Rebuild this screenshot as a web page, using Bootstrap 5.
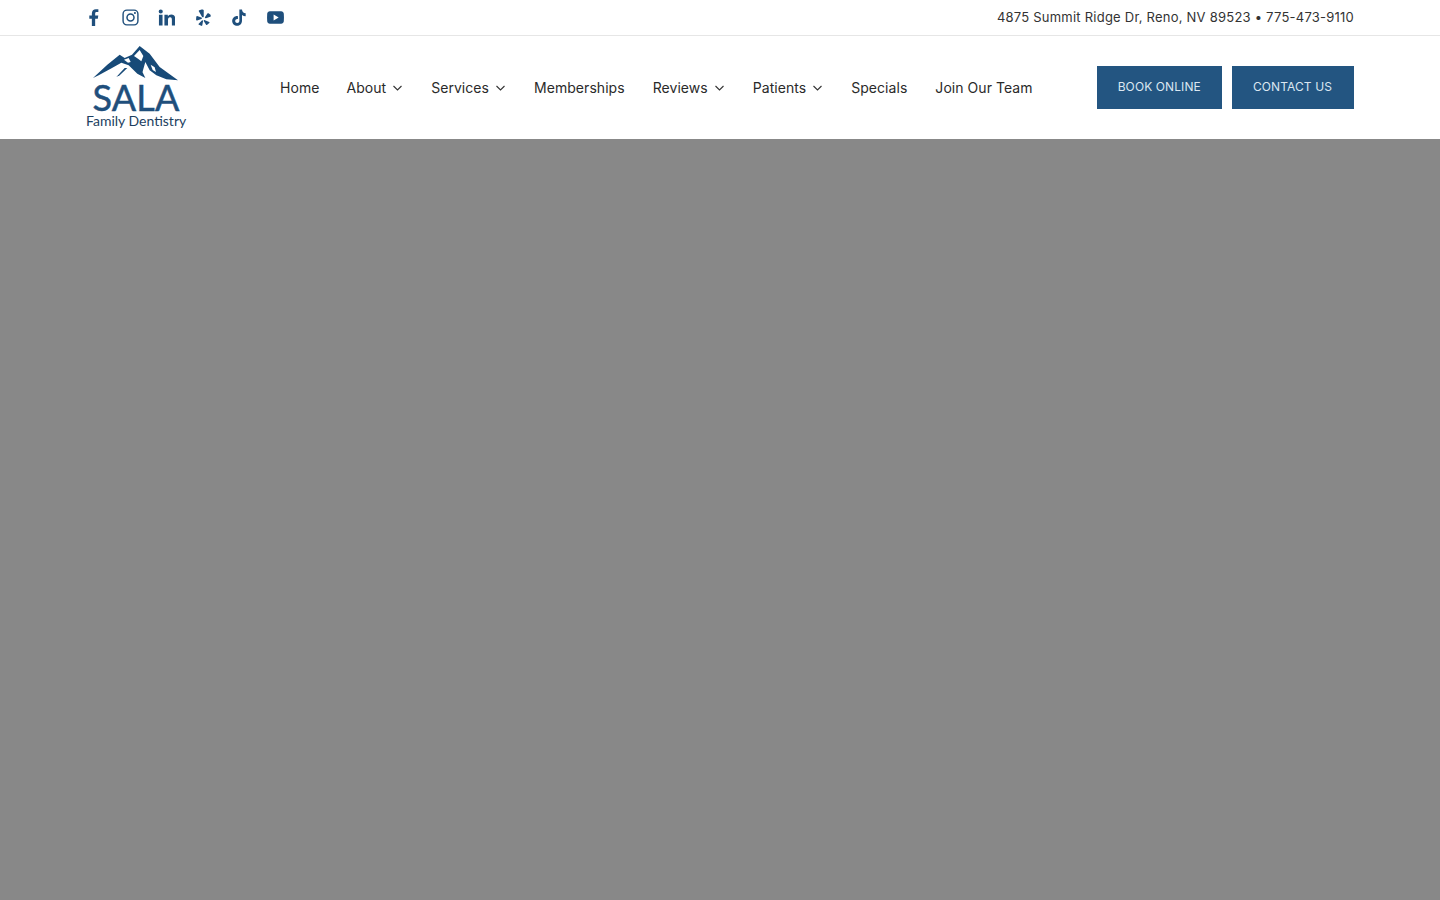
<!doctype html>
<html lang="en">
  <head>
    <meta charset="utf-8">
    <meta name="viewport" content="width=device-width, initial-scale=1">
    <title>Sala Family Dentistry</title>
    <link href="https://cdn.jsdelivr.net/npm/bootstrap@5.3.0/dist/css/bootstrap.min.css" rel="stylesheet">
    <style>
      html, body { height: 100%; }
      body {
        font-family: Inter, "Liberation Sans", sans-serif;
        background-color: #888888;
        color: #212934;
        overflow: hidden;
      }

      /* Top bar */
      .top-strip {
        height: 36px;
        background-color: #fff;
        border-bottom: 1px solid #e6e6e6;
        padding: 0 86px;
      }
      .social-row { margin-left: -10px; }
      .social-link {
        width: 36.2px;
        height: 35px;
        color: #1f4f7c;
      }
      .social-link svg { width: 17px; height: 17px; fill: currentColor; }
      .top-address {
        font-size: 13px;
        letter-spacing: .23px;
        color: #333;
      }

      /* Main header */
      .main-header {
        height: 103px;
        background-color: #fff;
        padding: 0 86px;
      }
      .site-logo {
        width: 194px;
        height: 103px;
        padding-top: 6px;
      }
      .logo-peaks { width: 96px; height: 44px; margin-left: 2px; display: block; }
      .logo-name {
        width: 100px;
        text-align: center;
        font-family: Lato, sans-serif;
        font-weight: 400;
        font-size: 36px;
        line-height: 28px;
        letter-spacing: .2px;
        color: #1f4f7c;
        -webkit-text-stroke: .5px #1f4f7c;
        margin-top: -3px;
      }
      .logo-sub {
        width: 100px;
        margin-top: 2px;
        text-align: center;
        font-family: Lato, sans-serif;
        font-size: 14px;
        line-height: 16px;
        color: #1d3f61;
        white-space: nowrap;
      }
      .menu-list { gap: 28px; }
      .menu-list .nav-link {
        padding: 0;
        font-size: 14px;
        letter-spacing: .05px;
        color: #2a2a2a;
      }
      .menu-first { margin-right: -1px; }
      .menu-caret { width: 10px; height: 10px; margin-left: 7px; }
      .header-actions { gap: 10px; }
      .header-btn {
        height: 43px;
        border-radius: 0;
        border: 0;
        font-size: 12px;
        letter-spacing: .1px;
        background-color: #235581;
        color: #dbe7f1;
        padding: 0 21px 1px;
      }
      .header-btn-wide { padding: 0 22px 1px 21px; }
      .header-btn:hover { background-color: #1f4f7c; color: #fff; }
    </style>
  </head>
  <body>
    <!-- Top bar -->
    <div class="top-strip d-flex align-items-center justify-content-between">
      <div class="d-flex social-row">
        <a class="social-link d-flex align-items-center justify-content-center" href="#" aria-label="Facebook">
          <svg viewBox="0 0 18 18"><path d="M6.200 18V10.200H3.500V6.800h2.700V4.700C6.200 1.800 7.900.2 10.500.2c1.200 0 2.300.1 2.600.1v3h-1.700c-1.400 0-1.700.7-1.700 1.600v1.900h3.300l-.5 3.400H9.700V18z"/></svg>
        </a>
        <a class="social-link d-flex align-items-center justify-content-center" href="#" aria-label="Instagram">
          <svg viewBox="0 0 18 18"><path fill-rule="evenodd" d="M5.200.4h7.600a4.800 4.800 0 0 1 4.800 4.800v7.600a4.800 4.800 0 0 1-4.800 4.800H5.200a4.800 4.800 0 0 1-4.800-4.800V5.200A4.800 4.800 0 0 1 5.200.4zm0 1.500a3.300 3.300 0 0 0-3.300 3.300v7.600a3.300 3.300 0 0 0 3.300 3.300h7.600a3.300 3.300 0 0 0 3.300-3.300V5.200a3.300 3.300 0 0 0-3.300-3.300zM9 4.500a4.500 4.500 0 1 1 0 9 4.500 4.500 0 0 1 0-9zm0 1.600a2.900 2.900 0 1 0 0 5.800 2.900 2.900 0 0 0 0-5.800zm4.700-2.900a1.100 1.100 0 1 1 0 2.200 1.100 1.100 0 0 1 0-2.200z"/></svg>
        </a>
        <a class="social-link d-flex align-items-center justify-content-center" href="#" aria-label="LinkedIn">
          <svg viewBox="-.6 0 18 18"><path d="M.4 6h3.800v11.600H.4zM2.300.4a2.200 2.200 0 1 1 0 4.400 2.200 2.200 0 0 1 0-4.400zM6.200 6h3.600v1.600h.1c.5-.9 1.700-1.900 3.500-1.900 3.700 0 4.300 2.400 4.300 5.500v6.400H14.100v-5.700c0-1.300 0-3.100-1.900-3.100s-2.200 1.500-2.200 3v5.800H6.200z"/></svg>
        </a>
        <a class="social-link d-flex align-items-center justify-content-center" href="#" aria-label="Yelp">
          <svg viewBox="-1.800 0 18 18"><path d="M6.300.5 3.800 1.300c-.5.200-.7.700-.5 1.100l3.500 6c.5.800 1.700.4 1.700-.5V1.300C8.500.6 7 .3 6.300.5zM1.500 7.500c-.5 0-.8.300-.9.800l-.2 3c0 .6.500 1 1.100.8l4.500-1.400c.8-.3.800-1.300 0-1.600zM6.500 12.100l-3.300 3.500c-.4.400-.3 1 .2 1.200l2.500 1c.5.200 1 0 1.100-.5l.8-4.600c.1-.8-.8-1.200-1.300-.6zM9.800 11.900c-.6-.6-1.500-.1-1.300.7l2.500 4c.3.400.9.500 1.200.1l2.200-1.800c.4-.3.300-.9-.1-1.200zM15.700 6.100l-2.100-1.500c-.4-.3-.9-.2-1.200.2l-2.500 3.700c-.5.700.2 1.600 1 1.300l4.500-1.500c.5-.2.700-.8.500-1.200z"/></svg>
        </a>
        <a class="social-link d-flex align-items-center justify-content-center" href="#" aria-label="TikTok">
          <svg viewBox="-.6 0 18 18"><path d="M9.300.4h2.800c.1 2.400 1.700 4 3.900 4.200v3c-1.500 0-2.800-.5-3.900-1.300v6.200c0 3.300-2.400 5.300-5.100 5.300-3 0-5.300-2.300-5.300-5.100 0-3.100 2.800-5.600 6.100-5.100v3.100c-1.500-.4-2.900.6-2.900 2 0 1.200 1 2.100 2.100 2.100 1.300 0 2.300-1 2.300-2.400z"/></svg>
        </a>
        <a class="social-link d-flex align-items-center justify-content-center" href="#" aria-label="YouTube">
          <svg viewBox="0 0 18 18"><path fill-rule="evenodd" d="M3 2.400h12c1.500 0 2.600 1.100 2.800 2.500.2 2.600.2 5.500 0 8.100-.2 1.500-1.300 2.600-2.800 2.600H3c-1.500 0-2.600-1.100-2.800-2.600C0 10.400 0 7.500.2 4.900.4 3.500 1.500 2.400 3 2.400zM7 5.800v6.400l5.400-3.200z"/></svg>
        </a>
      </div>
      <div class="top-address">4875 Summit Ridge Dr, Reno, NV 89523 • 775-473-9110</div>
    </div>

    <!-- Main header -->
    <header class="main-header d-flex align-items-center">
      <a class="site-logo d-block text-decoration-none" href="#">
        <svg class="logo-peaks" viewBox="0 0 288 132">
          <g fill="#174a78">
            <path d="M15 108 58 68 95 38 110 48 132 38 155 12 185 35 215 75 270 115 235 112 205 100 185 85 172 60 165 85 162 97 150 62 172 108 148 95 122 70 100 62 72 78 32 100Z"/>
            <path d="M85 105 110 78 118 78 95 100Z"/>
          </g>
          <g fill="#fff">
            <path d="M138 42 155 24 166 42 160 58 150 50Z"/>
            <path d="M108 53 122 48 128 60 120 62Z"/>
            <path d="M188 68 200 76 204 90 194 84Z"/>
          </g>
        </svg>
        <div class="logo-name">SALA</div>
        <div class="logo-sub">Family Dentistry</div>
      </a>

      <ul class="nav menu-list flex-nowrap align-items-center">
        <li class="nav-item menu-first"><a class="nav-link" href="#">Home</a></li>
        <li class="nav-item"><a class="nav-link d-flex align-items-center" href="#">About<svg class="menu-caret" viewBox="0 0 10 10"><path d="M.5 3l4 4 4-4" fill="none" stroke="#333" stroke-width="1.100"/></svg></a></li>
        <li class="nav-item"><a class="nav-link d-flex align-items-center" href="#">Services<svg class="menu-caret" viewBox="0 0 10 10"><path d="M.5 3l4 4 4-4" fill="none" stroke="#333" stroke-width="1.100"/></svg></a></li>
        <li class="nav-item"><a class="nav-link" href="#">Memberships</a></li>
        <li class="nav-item"><a class="nav-link d-flex align-items-center" href="#">Reviews<svg class="menu-caret" viewBox="0 0 10 10"><path d="M.5 3l4 4 4-4" fill="none" stroke="#333" stroke-width="1.100"/></svg></a></li>
        <li class="nav-item"><a class="nav-link d-flex align-items-center" href="#">Patients<svg class="menu-caret" viewBox="0 0 10 10"><path d="M.5 3l4 4 4-4" fill="none" stroke="#333" stroke-width="1.100"/></svg></a></li>
        <li class="nav-item"><a class="nav-link" href="#">Specials</a></li>
        <li class="nav-item"><a class="nav-link" href="#">Join Our Team</a></li>
      </ul>

      <div class="d-flex ms-auto header-actions">
        <a class="btn header-btn d-flex align-items-center" href="#">BOOK ONLINE</a>
        <a class="btn header-btn header-btn-wide d-flex align-items-center" href="#">CONTACT US</a>
      </div>
    </header>

    <script src="https://cdn.jsdelivr.net/npm/bootstrap@5.3.0/dist/js/bootstrap.bundle.min.js"></script>
  </body>
</html>
